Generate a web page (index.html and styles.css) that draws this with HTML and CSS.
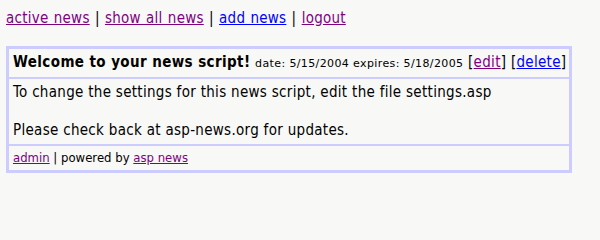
FILE: index.html
```html
<!DOCTYPE html>
<html>
<head>
<meta charset="utf-8">
<title>news</title>
<link rel="stylesheet" href="styles.css">
</head>
<body>
<div class="nav"><a class="visited" href="#">active news</a> | <a class="visited" href="#">show all news</a> | <a class="fresh" href="#">add news</a> | <a class="visited" href="#">logout</a></div>
<div class="box">
  <div class="cell head"><span class="title">Welcome to your news script!</span> <span class="dates">date: 5/15/2004 expires: 5/18/2005</span> [<a class="visited" href="#">edit</a>] [<a class="fresh" href="#">delete</a>]</div>
  <div class="cell body">To change the settings for this news script, edit the file settings.asp<br><br>Please check back at asp-news.org for updates.</div>
  <div class="cell foot"><a class="visited" href="#">admin</a> | powered by <a class="visited" href="#">asp news</a></div>
</div>
</body>
</html>
```
FILE: styles.css
```css
html, body {
  margin: 0;
  padding: 0;
  background: #f8f8f6;
}
body {
  padding: 9px 6px;
  font-family: Tahoma, "DejaVu Sans Condensed", "DejaVu Sans", sans-serif;
  font-size: 15px;
  letter-spacing: 0.25px;
  color: #000;
}
a { text-decoration: underline; }
a.visited { color: #800080; }
a.fresh { color: #0000ff; }
.nav {
  line-height: 19px;
  margin-bottom: 18px;
  word-spacing: 0.7px;
}
.box {
  width: 560px;
  background: #ccccff;
  padding: 3px;
  display: flex;
  flex-direction: column;
  gap: 2px;
}
.cell {
  background: #f8f8f6;
  padding: 4px 4px;
  line-height: 18px;
}
.head {
  white-space: nowrap;
  letter-spacing: 0.3px;
}
.title { font-weight: bold; letter-spacing: 0.4px; }
.dates {
  font-family: "DejaVu Sans", sans-serif;
  font-size: 11px;
  letter-spacing: 0.38px;
}
.body { line-height: 19px; padding: 4px 4px 4px; letter-spacing: 0.3px; }
.foot { font-size: 13px; letter-spacing: 0; padding: 3px 4px 3px; }
```
